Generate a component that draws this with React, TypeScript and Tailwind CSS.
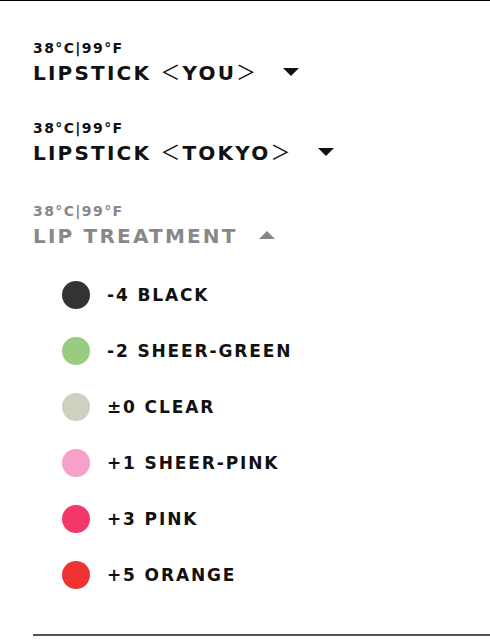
import React from "react";

const items = [
  { label: "-4 BLACK", color: "#333333" },
  { label: "-2 SHEER-GREEN", color: "#99cc80" },
  { label: "±0 CLEAR", color: "#d0d0c0" },
  { label: "+1 SHEER-PINK", color: "#f7a0cc" },
  { label: "+3 PINK", color: "#f5386a" },
  { label: "+5 ORANGE", color: "#ef3232" },
];

function Down({ className }: { className?: string }) {
  return (
    <svg width="16" height="8" viewBox="0 0 16 8" className={className}>
      <polygon points="0,0 16,0 8,8" fill="currentColor" />
    </svg>
  );
}
function Up({ className }: { className?: string }) {
  return (
    <svg width="16" height="8" viewBox="0 0 16 8" className={className}>
      <polygon points="0,8 16,8 8,0" fill="currentColor" />
    </svg>
  );
}

function Header({ title, open, gray }: { title: React.ReactNode; open?: boolean; gray?: boolean }) {
  const color = gray ? "text-[#888888]" : "text-[#111111]";
  return (
    <div className={`flex flex-col ${color}`}>
      <div className="text-[14px] leading-[16px] font-bold tracking-[0.1em]">38°C|99°F</div>
      <div className="flex items-center mt-[5px]">
        <span className="text-[20px] leading-[24px] font-bold tracking-[0.11em]">{title}</span>
        {open ? <Up className="ml-[21px] mt-[-2px]" /> : <Down className="ml-[25px] mt-[-2px]" />}
      </div>
    </div>
  );
}

export default function App() {
  return (
    <div
      className="w-[490px] h-[640px] bg-white border-t border-black overflow-hidden"
      style={{ fontFamily: "'DejaVu Sans', 'Noto Sans CJK JP', sans-serif" }}
    >
      <div className="pl-[33px] pt-[39px] flex flex-col">
        <Header title={<>LIPSTICK <span className="font-normal">＜</span>YOU<span className="font-normal">＞</span></>} />
        <div className="h-[35px]" />
        <Header title={<>LIPSTICK <span className="font-normal">＜</span>TOKYO<span className="font-normal">＞</span></>} />
        <div className="h-[38px]" />
        <Header title="LIP TREATMENT" open gray />
        <div className="flex flex-col mt-[19px] pl-[29px]">
          {items.map((it) => (
            <div key={it.label} className="flex items-center h-[56px]">
              <div className="w-[28px] h-[28px] rounded-full" style={{ backgroundColor: it.color }} />
              <span className="ml-[17px] text-[17px] leading-[20px] font-bold tracking-[0.11em] text-[#111111]">
                {it.label}
              </span>
            </div>
          ))}
        </div>
        <div className="mt-[31px] border-t-2 border-[#555555]" />
      </div>
    </div>
  );
}
